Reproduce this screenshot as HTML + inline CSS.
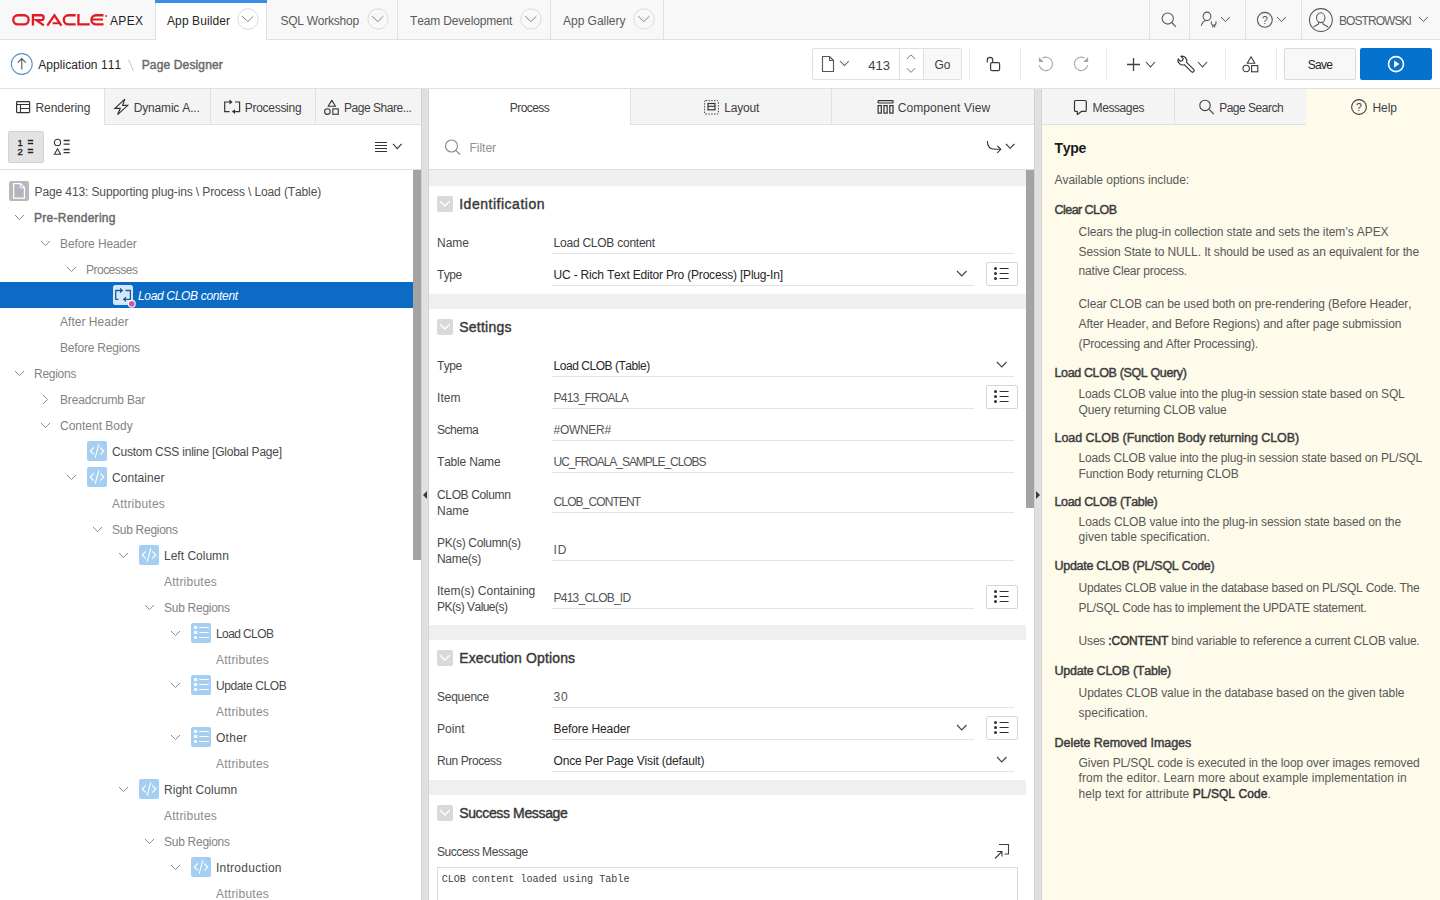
<!DOCTYPE html><html><head><meta charset="utf-8"><title>Page Designer</title><style>
html,body{margin:0;padding:0;width:1440px;height:900px;overflow:hidden;background:#fff;font-family:"Liberation Sans",sans-serif;}
.t{position:absolute;white-space:nowrap;font-kerning:none;}
.r{position:absolute;box-sizing:border-box;}
.s{position:absolute;overflow:visible;}
</style></head><body>
<div class="r" style="left:0px;top:0px;width:1440px;height:39px;background:#f8f8f8;"></div>
<div class="r" style="left:0px;top:39px;width:1440px;height:1px;background:#e0e0e0;"></div>
<svg class="s" style="left:10px;top:12px;" width="100" height="16" viewBox="0 0 100 16"><g fill="none" stroke="#e11b22" stroke-width="2.3">
<rect x="3.25" y="3.25" width="15.4" height="9.2" rx="4.6"/>
<path d="M22.95 13.6 V3.25 H31.2 A2.45 2.45 0 0 1 31.2 8.15 H26.3 L33.9 13.4"/>
<path d="M37.3 13.7 L44.4 3.3 L51.4 13.7"/>
<path d="M65.7 3.25 H58.4 A4.6 4.6 0 0 0 58.4 12.45 H65.7"/>
<path d="M68.45 2.1 V12.45 H79.7"/>
<path d="M93.5 3.25 H86.0 A4.6 4.6 0 0 0 86.0 12.45 H93.5"/>
</g><g stroke="#e11b22" stroke-width="2"><path d="M42.6 11.3 H49.3 M81.5 7.6 H93"/></g><circle cx="96.2" cy="4" r="0.9" fill="#e11b22"/></svg>
<div class="t" style="left:110.0px;top:14px;font-size:12px;line-height:14px;color:#222;font-weight:400;font-style:normal;font-family:'Liberation Sans', sans-serif;letter-spacing:0.328px;">APEX</div>
<div class="r" style="left:155px;top:0px;width:112px;height:40px;background:#fff;border-left:1px solid #e0e0e0;border-right:1px solid #e0e0e0;"></div>
<div class="r" style="left:155px;top:0px;width:112px;height:3px;background:#3a8ee6;"></div>
<div class="r" style="left:397px;top:0px;width:1px;height:39px;background:#e0e0e0;"></div>
<div class="r" style="left:550px;top:0px;width:1px;height:39px;background:#e0e0e0;"></div>
<div class="r" style="left:663px;top:0px;width:1px;height:39px;background:#e0e0e0;"></div>
<div class="t" style="left:167.0px;top:14px;font-size:12px;line-height:14px;color:#262626;font-weight:400;font-style:normal;font-family:'Liberation Sans', sans-serif;letter-spacing:0.106px;">App Builder</div>
<svg class="s" style="left:237px;top:8px;" width="22" height="22" viewBox="0 0 22 22"><circle cx="11" cy="11" r="10.2" fill="none" stroke="#dcdcdc" stroke-width="1"/><path d="M5.2 8.2 L10.8 13.6 L16.4 8.2" fill="none" stroke="#858585" stroke-width="1"/></svg>
<div class="t" style="left:280.4px;top:14px;font-size:12px;line-height:14px;color:#5a5a5a;font-weight:400;font-style:normal;font-family:'Liberation Sans', sans-serif;letter-spacing:-0.242px;">SQL Workshop</div>
<svg class="s" style="left:367px;top:8px;" width="22" height="22" viewBox="0 0 22 22"><circle cx="11" cy="11" r="10.2" fill="none" stroke="#dcdcdc" stroke-width="1"/><path d="M5.2 8.2 L10.8 13.6 L16.4 8.2" fill="none" stroke="#858585" stroke-width="1"/></svg>
<div class="t" style="left:410.0px;top:14px;font-size:12px;line-height:14px;color:#5a5a5a;font-weight:400;font-style:normal;font-family:'Liberation Sans', sans-serif;letter-spacing:-0.154px;">Team Development</div>
<svg class="s" style="left:520px;top:8px;" width="22" height="22" viewBox="0 0 22 22"><circle cx="11" cy="11" r="10.2" fill="none" stroke="#dcdcdc" stroke-width="1"/><path d="M5.2 8.2 L10.8 13.6 L16.4 8.2" fill="none" stroke="#858585" stroke-width="1"/></svg>
<div class="t" style="left:563.0px;top:14px;font-size:12px;line-height:14px;color:#5a5a5a;font-weight:400;font-style:normal;font-family:'Liberation Sans', sans-serif;letter-spacing:-0.02px;">App Gallery</div>
<svg class="s" style="left:633px;top:8px;" width="22" height="22" viewBox="0 0 22 22"><circle cx="11" cy="11" r="10.2" fill="none" stroke="#dcdcdc" stroke-width="1"/><path d="M5.2 8.2 L10.8 13.6 L16.4 8.2" fill="none" stroke="#858585" stroke-width="1"/></svg>
<div class="r" style="left:1149px;top:0px;width:1px;height:39px;background:#e0e0e0;"></div>
<div class="r" style="left:1189px;top:0px;width:1px;height:39px;background:#e0e0e0;"></div>
<div class="r" style="left:1245px;top:0px;width:1px;height:39px;background:#e0e0e0;"></div>
<div class="r" style="left:1301px;top:0px;width:1px;height:39px;background:#e0e0e0;"></div>
<svg class="s" style="left:1159px;top:11px;" width="20" height="20" viewBox="0 0 20 20"><circle cx="8.75" cy="7.5" r="5.6" fill="none" stroke="#555" stroke-width="1.05"/><path d="M12.7 11.5 L17 15.8" stroke="#555" stroke-width="1.1"/></svg>
<svg class="s" style="left:1198px;top:10px;" width="22" height="22" viewBox="0 0 22 22"><ellipse cx="9" cy="6.3" rx="3.9" ry="4.2" fill="none" stroke="#555" stroke-width="1.05"/><path d="M8.3 10.6 C6 11 4 12.5 3.3 15.9" fill="none" stroke="#555" stroke-width="1.05"/><path d="M13.3 11.2 V13 A2.35 2.35 0 0 0 18 13 V11.2 M14.8 15.2 V17.6 M16.5 15.2 V17.6" fill="none" stroke="#555" stroke-width="1.05"/></svg>
<svg class="s" style="left:1219.8px;top:16.2px;" width="10.8" height="6.6" viewBox="0 0 10.8 6.6"><path d="M1 1 L5.4 5.6 L9.8 1" fill="none" stroke="#555" stroke-width="1.0"/></svg>
<svg class="s" style="left:1255px;top:10px;" width="20" height="20" viewBox="0 0 20 20"><circle cx="9.85" cy="9.8" r="7.45" fill="none" stroke="#555" stroke-width="1.05"/><text x="9.85" y="13.8" font-size="10.5" text-anchor="middle" fill="#555" font-family="Liberation Sans">?</text></svg>
<svg class="s" style="left:1275.8px;top:16.2px;" width="10.8" height="6.6" viewBox="0 0 10.8 6.6"><path d="M1 1 L5.4 5.6 L9.8 1" fill="none" stroke="#555" stroke-width="1.0"/></svg>
<svg class="s" style="left:1307px;top:7px;" width="28" height="28" viewBox="0 0 28 28"><circle cx="13.9" cy="13" r="11.4" fill="none" stroke="#555" stroke-width="1.05"/><ellipse cx="13.75" cy="10.7" rx="4.2" ry="4.9" fill="none" stroke="#555" stroke-width="1.05"/><path d="M11.6 15.3 V17 L6.5 20 M15.9 15.3 V17 L21.2 20" fill="none" stroke="#555" stroke-width="1.05"/></svg>
<div class="t" style="left:1339.0px;top:14px;font-size:12px;line-height:14px;color:#5e5e5e;font-weight:400;font-style:normal;font-family:'Liberation Sans', sans-serif;letter-spacing:-0.938px;">BOSTROWSKI</div>
<svg class="s" style="left:1418.3px;top:16.2px;" width="10.8" height="6.6" viewBox="0 0 10.8 6.6"><path d="M1 1 L5.4 5.6 L9.8 1" fill="none" stroke="#555" stroke-width="1.0"/></svg>
<div class="r" style="left:0px;top:40px;width:1440px;height:48px;background:#fff;"></div>
<div class="r" style="left:0px;top:88px;width:1440px;height:1px;background:#e0e0e0;"></div>
<svg class="s" style="left:10px;top:52px;" width="24" height="24" viewBox="0 0 24 24"><circle cx="11.8" cy="12" r="10.4" fill="none" stroke="#6093c3" stroke-width="1.1"/><path d="M11.8 17.5 V6.8 M7.8 10.6 L11.8 6.6 L15.8 10.6" fill="none" stroke="#555" stroke-width="1.1"/></svg>
<div class="t" style="left:38.3px;top:58px;font-size:12px;line-height:14px;color:#262626;font-weight:400;font-style:normal;font-family:'Liberation Sans', sans-serif;letter-spacing:0.053px;">Application 111</div>
<svg class="s" style="left:126px;top:58px;" width="10" height="14" viewBox="0 0 10 14"><path d="M2.5 1.5 L7.5 13" stroke="#c8c8c8" stroke-width="1"/></svg>
<div class="t" style="left:141.7px;top:58px;font-size:12px;line-height:14px;color:#6b6b6b;font-weight:400;font-style:normal;font-family:'Liberation Sans', sans-serif;letter-spacing:0.143px;-webkit-text-stroke:0.45px #6b6b6b;">Page Designer</div>
<div class="r" style="left:812px;top:48px;width:150px;height:32px;background:#fff;border:1px solid #e0e0e0;border-radius:2px;"></div>
<div class="r" style="left:923px;top:49px;width:38px;height:30px;background:#f8f8f8;"></div>
<div class="r" style="left:899px;top:49px;width:1px;height:30px;background:#e0e0e0;"></div>
<div class="r" style="left:923px;top:49px;width:1px;height:30px;background:#e0e0e0;"></div>
<svg class="s" style="left:820px;top:55px;" width="16" height="18" viewBox="0 0 16 18"><path d="M2.5 1.5 H9.5 L13.5 5.5 V16.5 H2.5 Z M9.5 1.5 V5.5 H13.5" fill="none" stroke="#555" stroke-width="1.1" stroke-linejoin="round"/></svg>
<svg class="s" style="left:838.5px;top:60.3px;" width="10.8" height="6.5" viewBox="0 0 10.8 6.5"><path d="M1 1 L5.4 5.5 L9.8 1" fill="none" stroke="#555" stroke-width="1.05"/></svg>
<div class="t" style="left:868.3px;top:58px;font-size:13px;line-height:16px;color:#404040;font-weight:400;font-style:normal;font-family:'Liberation Sans', sans-serif;">413</div>
<svg class="s" style="left:904px;top:53px;" width="14" height="24" viewBox="0 0 14 24"><path d="M2.8 6 L7 1.8 L11.2 6 M2.8 15.2 L7 19.4 L11.2 15.2" fill="none" stroke="#777" stroke-width="1"/></svg>
<div class="t" style="left:642.5px;width:600px;text-align:center;top:58px;font-size:12px;line-height:14px;color:#404040;font-weight:400;">Go</div>
<div class="r" style="left:969px;top:48px;width:1px;height:32px;background:#ececec;"></div>
<div class="r" style="left:1020px;top:48px;width:1px;height:32px;background:#ececec;"></div>
<div class="r" style="left:1106px;top:48px;width:1px;height:32px;background:#ececec;"></div>
<div class="r" style="left:1225px;top:48px;width:1px;height:32px;background:#ececec;"></div>
<div class="r" style="left:1276px;top:48px;width:1px;height:32px;background:#ececec;"></div>
<svg class="s" style="left:984px;top:54px;" width="20" height="20" viewBox="0 0 20 20"><rect x="6.6" y="8.6" width="9" height="8" rx="1.3" fill="none" stroke="#3a3a3a" stroke-width="1.2"/><path d="M3.3 8.6 V6 A2.7 2.7 0 0 1 8.7 6 V8.6" fill="none" stroke="#3a3a3a" stroke-width="1.2"/></svg>
<svg class="s" style="left:1037px;top:55px;" width="20" height="18" viewBox="0 0 20 18"><path d="M5.45 3.1 A6.7 6.7 0 1 1 2.2 10" fill="none" stroke="#aaa" stroke-width="1.15"/><path d="M1.9 2 V7 H6.9 Z" fill="#a5a5a5"/></svg>
<svg class="s" style="left:1071px;top:55px;" width="20" height="18" viewBox="0 0 20 18"><path d="M13.45 3.1 A6.7 6.7 0 1 0 16.7 10" fill="none" stroke="#aaa" stroke-width="1.15"/><path d="M17.1 2 V7 H12.1 Z" fill="#a5a5a5"/></svg>
<svg class="s" style="left:1126px;top:57px;" width="16" height="16" viewBox="0 0 16 16"><path d="M7.5 1 V14 M1 7.5 H14" stroke="#404040" stroke-width="1.3"/></svg>
<svg class="s" style="left:1145px;top:61px;" width="11" height="7" viewBox="0 0 11 7"><path d="M1 1 L5.5 6 L10 1" fill="none" stroke="#404040" stroke-width="1.1"/></svg>
<svg class="s" style="left:1177px;top:55px;" width="20" height="20" viewBox="0 0 20 20"><path d="M9.6 7.4 A4.8 4.8 0 0 0 4 1.3 L6.3 3.7 L5.4 5.6 L3.3 6.2 L1.1 3.9 A4.8 4.8 0 0 0 7.3 9.7 L14.3 16.7 A1.65 1.65 0 0 0 16.7 14.3 Z" fill="none" stroke="#333" stroke-width="1.15" stroke-linejoin="round"/></svg>
<svg class="s" style="left:1197px;top:61px;" width="11" height="7" viewBox="0 0 11 7"><path d="M1 1 L5.5 6 L10 1" fill="none" stroke="#404040" stroke-width="1.1"/></svg>
<svg class="s" style="left:1241px;top:54px;" width="20" height="20" viewBox="0 0 20 20"><path d="M10.05 2.8 L13.9 9.3 H6.2 Z" fill="none" stroke="#3a3a3a" stroke-width="1.1" stroke-linejoin="round"/><circle cx="5.15" cy="14.5" r="3.2" fill="none" stroke="#3a3a3a" stroke-width="1.1"/><rect x="10.6" y="11.6" width="6.2" height="6.2" fill="none" stroke="#3a3a3a" stroke-width="1.1"/></svg>
<div class="r" style="left:1284px;top:48px;width:72px;height:32px;background:#f8f8f8;border:1px solid #d8d8d8;border-radius:2px;"></div>
<div class="t" style="left:1020.0px;width:600px;text-align:center;top:58px;font-size:12px;line-height:14px;color:#262626;font-weight:400;letter-spacing:-0.751px;">Save</div>
<div class="r" style="left:1360px;top:48px;width:72px;height:32px;background:#0572ce;border-radius:2px;"></div>
<svg class="s" style="left:1386px;top:55px;" width="20" height="20" viewBox="0 0 20 20"><circle cx="10" cy="9.1" r="7.5" fill="none" stroke="#fff" stroke-width="1.6"/><path d="M8.1 5.4 L13.4 9.1 L8.1 12.8 Z" fill="#fff"/></svg>
<div class="r" style="left:0px;top:89px;width:421px;height:36px;background:#f4f4f4;"></div>
<div class="r" style="left:0px;top:124px;width:421px;height:1px;background:#e0e0e0;"></div>
<div class="r" style="left:0px;top:89px;width:104px;height:36px;background:#fff;"></div>
<div class="r" style="left:104px;top:89px;width:1px;height:35px;background:#e0e0e0;"></div>
<div class="r" style="left:210px;top:89px;width:1px;height:35px;background:#e0e0e0;"></div>
<div class="r" style="left:315px;top:89px;width:1px;height:35px;background:#e0e0e0;"></div>
<svg class="s" style="left:14px;top:98px;" width="18" height="18" viewBox="0 0 18 18"><rect x="2.6" y="3.6" width="13" height="11" rx="0.8" fill="none" stroke="#333" stroke-width="1.2"/><path d="M2.6 6.5 H15.6 M6.5 6.5 V14.6 M6.5 10.5 H15.6" fill="none" stroke="#333" stroke-width="1.1"/></svg>
<div class="t" style="left:35.5px;top:101px;font-size:12px;line-height:14px;color:#404040;font-weight:400;font-style:normal;font-family:'Liberation Sans', sans-serif;letter-spacing:-0.071px;">Rendering</div>
<svg class="s" style="left:113px;top:97px;" width="18" height="20" viewBox="0 0 18 20"><path d="M11.8 2.1 L1.9 11.3 H7.3 L4.6 17.6 L14.7 8.4 H9.6 Z" fill="none" stroke="#333" stroke-width="1.15" stroke-linejoin="miter"/></svg>
<div class="t" style="left:133.8px;top:101px;font-size:12px;line-height:14px;color:#404040;font-weight:400;font-style:normal;font-family:'Liberation Sans', sans-serif;letter-spacing:-0.183px;">Dynamic A...</div>
<svg class="s" style="left:222px;top:97px;" width="20" height="20" viewBox="0 0 20 20"><path d="M8 5 H2.7 V14.6 H7.5 M13 5 H17.6 V14.6 H12" fill="none" stroke="#333" stroke-width="1.2"/><path d="M7.5 2.6 L10.6 5 L7.5 7.4 Z M13 12.2 L9.9 14.6 L13 17 Z" fill="#333"/></svg>
<div class="t" style="left:244.7px;top:101px;font-size:12px;line-height:14px;color:#404040;font-weight:400;font-style:normal;font-family:'Liberation Sans', sans-serif;letter-spacing:-0.273px;">Processing</div>
<svg class="s" style="left:322px;top:97px;" width="20" height="20" viewBox="0 0 20 20"><path d="M9.8 3.4 L13.5 9.2 H6.1 Z" fill="none" stroke="#333" stroke-width="1.1" stroke-linejoin="round"/><circle cx="5.4" cy="14.6" r="2.8" fill="none" stroke="#333" stroke-width="1.1"/><rect x="10.85" y="11.85" width="5.4" height="5.4" fill="none" stroke="#333" stroke-width="1.1"/></svg>
<div class="t" style="left:344.0px;top:101px;font-size:12px;line-height:14px;color:#404040;font-weight:400;font-style:normal;font-family:'Liberation Sans', sans-serif;letter-spacing:-0.457px;">Page Share...</div>
<div class="r" style="left:0px;top:169px;width:421px;height:1px;background:#e0e0e0;"></div>
<div class="r" style="left:8px;top:131px;width:36px;height:32px;background:#e3e3e3;border:1px solid #d2d2d2;border-radius:2px;"></div>
<svg class="s" style="left:16px;top:138px;" width="20" height="18" viewBox="0 0 20 18"><text x="1.6" y="7.9" font-size="9.6" font-family="Liberation Sans" fill="#222" stroke="#222" stroke-width="0.35">1</text><text x="1.6" y="16.9" font-size="9.6" font-family="Liberation Sans" fill="#222" stroke="#222" stroke-width="0.35">2</text><path d="M11.8 2.5 H17.2 M11.8 5.6 H17.2 M11.8 11.4 H17.2 M11.8 14.5 H17.2" stroke="#222" stroke-width="1.5"/></svg>
<svg class="s" style="left:52px;top:138px;" width="20" height="18" viewBox="0 0 20 18"><circle cx="5.5" cy="4.4" r="3.1" fill="none" stroke="#333" stroke-width="1.1"/><path d="M5.5 10.8 L8.6 16.2 H2.4 Z" fill="none" stroke="#333" stroke-width="1.1"/><path d="M11.6 2.5 H17.7 M11.6 6.2 H17.7 M11.6 11.5 H17.7 M11.6 14.6 H17.7" stroke="#333" stroke-width="1.3"/></svg>
<svg class="s" style="left:374px;top:140px;" width="14" height="14" viewBox="0 0 14 14"><path d="M1 2.5 H13 M1 5.5 H13 M1 8.5 H13 M1 11.5 H13" stroke="#333" stroke-width="1.1"/></svg>
<svg class="s" style="left:392px;top:143px;" width="10.6" height="6.6" viewBox="0 0 10.6 6.6"><path d="M1 1 L5.3 5.6 L9.6 1" fill="none" stroke="#333" stroke-width="1.1"/></svg>
<div class="r" style="left:413px;top:170px;width:8px;height:390px;background:#a3a3a3;"></div>
<div class="r" style="left:0px;top:282px;width:413px;height:26px;background:#0b6bc5;"></div>
<svg class="s" style="left:9px;top:181px;" width="20" height="20" viewBox="0 0 20 20"><rect x="0" y="0" width="20" height="20" rx="2" fill="#b9b9b9"/><path d="M4.7 2.6 H11.6 L15.4 6.4 V17.2 H4.7 Z" fill="#b5b3bd" stroke="#fff" stroke-width="1.2" stroke-linejoin="miter"/><path d="M11.3 2.6 V6.7 H15.4" fill="none" stroke="#fff" stroke-width="1"/></svg>
<div class="t" style="left:34.6px;top:185px;font-size:12px;line-height:14px;color:#505050;font-weight:400;font-style:normal;font-family:'Liberation Sans', sans-serif;letter-spacing:-0.118px;">Page 413: Supporting plug-ins \ Process \ Load (Table)</div>
<svg class="s" style="left:13.8px;top:214px;" width="11" height="6.6" viewBox="0 0 11 6.6"><path d="M1 1 L5.5 5.6 L10 1" fill="none" stroke="#8a8a8a" stroke-width="1.0"/></svg>
<div class="t" style="left:34.0px;top:211px;font-size:12px;line-height:14px;color:#6a6a6a;font-weight:400;font-style:normal;font-family:'Liberation Sans', sans-serif;letter-spacing:0.288px;-webkit-text-stroke:0.45px #6a6a6a;">Pre-Rendering</div>
<svg class="s" style="left:39.8px;top:240px;" width="11" height="6.6" viewBox="0 0 11 6.6"><path d="M1 1 L5.5 5.6 L10 1" fill="none" stroke="#8a8a8a" stroke-width="1.0"/></svg>
<div class="t" style="left:60.0px;top:237px;font-size:12px;line-height:14px;color:#838383;font-weight:400;font-style:normal;font-family:'Liberation Sans', sans-serif;letter-spacing:-0.112px;">Before Header</div>
<svg class="s" style="left:65.8px;top:266px;" width="11" height="6.6" viewBox="0 0 11 6.6"><path d="M1 1 L5.5 5.6 L10 1" fill="none" stroke="#8a8a8a" stroke-width="1.0"/></svg>
<div class="t" style="left:86.0px;top:263px;font-size:12px;line-height:14px;color:#838383;font-weight:400;font-style:normal;font-family:'Liberation Sans', sans-serif;letter-spacing:-0.515px;">Processes</div>
<svg class="s" style="left:113px;top:285px;" width="24" height="24" viewBox="0 0 24 24"><rect x="0" y="0" width="20" height="20" rx="2.5" fill="#d3e9fb"/><path d="M7.5 5.5 H2.7 V14.3 H5.5 M12.5 5.5 H17.4 V14.3 H12" fill="none" stroke="#1f5a9c" stroke-width="1.3"/><path d="M7 2.8 L10.3 5.5 L7 8.2 Z M13 11.6 L9.7 14.3 L13 17 Z" fill="#1f5a9c"/><circle cx="18.8" cy="18.8" r="3.4" fill="#c85a9e" stroke="#fff" stroke-width="1.1"/></svg>
<div class="t" style="left:138.0px;top:289px;font-size:12px;line-height:14px;color:#ffffff;font-weight:400;font-style:italic;font-family:'Liberation Sans', sans-serif;letter-spacing:-0.332px;">Load CLOB content</div>
<div class="t" style="left:60.0px;top:315px;font-size:12px;line-height:14px;color:#838383;font-weight:400;font-style:normal;font-family:'Liberation Sans', sans-serif;letter-spacing:0.033px;">After Header</div>
<div class="t" style="left:60.0px;top:341px;font-size:12px;line-height:14px;color:#838383;font-weight:400;font-style:normal;font-family:'Liberation Sans', sans-serif;letter-spacing:-0.201px;">Before Regions</div>
<svg class="s" style="left:13.8px;top:370px;" width="11" height="6.6" viewBox="0 0 11 6.6"><path d="M1 1 L5.5 5.6 L10 1" fill="none" stroke="#8a8a8a" stroke-width="1.0"/></svg>
<div class="t" style="left:34.0px;top:367px;font-size:12px;line-height:14px;color:#838383;font-weight:400;font-style:normal;font-family:'Liberation Sans', sans-serif;letter-spacing:-0.271px;">Regions</div>
<svg class="s" style="left:42.3px;top:393.5px;" width="6.6" height="11" viewBox="0 0 6.6 11"><path d="M1 1 L5.6 5.5 L1 10" fill="none" stroke="#8a8a8a" stroke-width="1.0"/></svg>
<div class="t" style="left:60.0px;top:393px;font-size:12px;line-height:14px;color:#838383;font-weight:400;font-style:normal;font-family:'Liberation Sans', sans-serif;letter-spacing:-0.159px;">Breadcrumb Bar</div>
<svg class="s" style="left:39.8px;top:422px;" width="11" height="6.6" viewBox="0 0 11 6.6"><path d="M1 1 L5.5 5.6 L10 1" fill="none" stroke="#8a8a8a" stroke-width="1.0"/></svg>
<div class="t" style="left:60.0px;top:419px;font-size:12px;line-height:14px;color:#838383;font-weight:400;font-style:normal;font-family:'Liberation Sans', sans-serif;letter-spacing:-0.001px;">Content Body</div>
<svg class="s" style="left:87px;top:441px;" width="20" height="20" viewBox="0 0 20 20"><rect x="0" y="0" width="20" height="20" rx="2" fill="#a5cef3"/><path d="M6.8 6.3 L3.2 10 L6.8 13.7 M13.2 6.3 L16.8 10 L13.2 13.7 M11.8 3.3 L8.2 16.7" fill="none" stroke="#fff" stroke-width="1.15"/></svg>
<div class="t" style="left:112.0px;top:445px;font-size:12px;line-height:14px;color:#4a4a4a;font-weight:400;font-style:normal;font-family:'Liberation Sans', sans-serif;letter-spacing:-0.222px;">Custom CSS inline [Global Page]</div>
<svg class="s" style="left:65.8px;top:474px;" width="11" height="6.6" viewBox="0 0 11 6.6"><path d="M1 1 L5.5 5.6 L10 1" fill="none" stroke="#8a8a8a" stroke-width="1.0"/></svg>
<svg class="s" style="left:87px;top:467px;" width="20" height="20" viewBox="0 0 20 20"><rect x="0" y="0" width="20" height="20" rx="2" fill="#a5cef3"/><path d="M6.8 6.3 L3.2 10 L6.8 13.7 M13.2 6.3 L16.8 10 L13.2 13.7 M11.8 3.3 L8.2 16.7" fill="none" stroke="#fff" stroke-width="1.15"/></svg>
<div class="t" style="left:112.0px;top:471px;font-size:12px;line-height:14px;color:#4a4a4a;font-weight:400;font-style:normal;font-family:'Liberation Sans', sans-serif;letter-spacing:0.046px;">Container</div>
<div class="t" style="left:112.0px;top:497px;font-size:12px;line-height:14px;color:#8c8c8c;font-weight:400;font-style:normal;font-family:'Liberation Sans', sans-serif;letter-spacing:0.235px;">Attributes</div>
<svg class="s" style="left:91.8px;top:526px;" width="11" height="6.6" viewBox="0 0 11 6.6"><path d="M1 1 L5.5 5.6 L10 1" fill="none" stroke="#8a8a8a" stroke-width="1.0"/></svg>
<div class="t" style="left:112.0px;top:523px;font-size:12px;line-height:14px;color:#838383;font-weight:400;font-style:normal;font-family:'Liberation Sans', sans-serif;letter-spacing:-0.271px;">Sub Regions</div>
<svg class="s" style="left:117.8px;top:552px;" width="11" height="6.6" viewBox="0 0 11 6.6"><path d="M1 1 L5.5 5.6 L10 1" fill="none" stroke="#8a8a8a" stroke-width="1.0"/></svg>
<svg class="s" style="left:139px;top:545px;" width="20" height="20" viewBox="0 0 20 20"><rect x="0" y="0" width="20" height="20" rx="2" fill="#a5cef3"/><path d="M6.8 6.3 L3.2 10 L6.8 13.7 M13.2 6.3 L16.8 10 L13.2 13.7 M11.8 3.3 L8.2 16.7" fill="none" stroke="#fff" stroke-width="1.15"/></svg>
<div class="t" style="left:164.0px;top:549px;font-size:12px;line-height:14px;color:#4a4a4a;font-weight:400;font-style:normal;font-family:'Liberation Sans', sans-serif;letter-spacing:0.01px;">Left Column</div>
<div class="t" style="left:164.0px;top:575px;font-size:12px;line-height:14px;color:#8c8c8c;font-weight:400;font-style:normal;font-family:'Liberation Sans', sans-serif;letter-spacing:0.235px;">Attributes</div>
<svg class="s" style="left:143.8px;top:604px;" width="11" height="6.6" viewBox="0 0 11 6.6"><path d="M1 1 L5.5 5.6 L10 1" fill="none" stroke="#8a8a8a" stroke-width="1.0"/></svg>
<div class="t" style="left:164.0px;top:601px;font-size:12px;line-height:14px;color:#838383;font-weight:400;font-style:normal;font-family:'Liberation Sans', sans-serif;letter-spacing:-0.271px;">Sub Regions</div>
<svg class="s" style="left:169.8px;top:630px;" width="11" height="6.6" viewBox="0 0 11 6.6"><path d="M1 1 L5.5 5.6 L10 1" fill="none" stroke="#8a8a8a" stroke-width="1.0"/></svg>
<svg class="s" style="left:191px;top:623px;" width="20" height="20" viewBox="0 0 20 20"><rect x="0" y="0" width="20" height="20" rx="2" fill="#a5cef3"/><path d="M8.2 4.5 H17.8 M8.2 9.5 H17.8 M8.2 14.5 H17.8" stroke="#fff" stroke-width="1.1"/><rect x="3" y="3" width="3.2" height="3" fill="#fff"/><rect x="3" y="8" width="3.2" height="3" fill="#fff"/><rect x="3" y="13" width="3.2" height="3" rx="1.2" fill="#fff"/></svg>
<div class="t" style="left:216.0px;top:627px;font-size:12px;line-height:14px;color:#4a4a4a;font-weight:400;font-style:normal;font-family:'Liberation Sans', sans-serif;letter-spacing:-0.601px;">Load CLOB</div>
<div class="t" style="left:216.0px;top:653px;font-size:12px;line-height:14px;color:#8c8c8c;font-weight:400;font-style:normal;font-family:'Liberation Sans', sans-serif;letter-spacing:0.235px;">Attributes</div>
<svg class="s" style="left:169.8px;top:682px;" width="11" height="6.6" viewBox="0 0 11 6.6"><path d="M1 1 L5.5 5.6 L10 1" fill="none" stroke="#8a8a8a" stroke-width="1.0"/></svg>
<svg class="s" style="left:191px;top:675px;" width="20" height="20" viewBox="0 0 20 20"><rect x="0" y="0" width="20" height="20" rx="2" fill="#a5cef3"/><path d="M8.2 4.5 H17.8 M8.2 9.5 H17.8 M8.2 14.5 H17.8" stroke="#fff" stroke-width="1.1"/><rect x="3" y="3" width="3.2" height="3" fill="#fff"/><rect x="3" y="8" width="3.2" height="3" fill="#fff"/><rect x="3" y="13" width="3.2" height="3" rx="1.2" fill="#fff"/></svg>
<div class="t" style="left:216.0px;top:679px;font-size:12px;line-height:14px;color:#4a4a4a;font-weight:400;font-style:normal;font-family:'Liberation Sans', sans-serif;letter-spacing:-0.401px;">Update CLOB</div>
<div class="t" style="left:216.0px;top:705px;font-size:12px;line-height:14px;color:#8c8c8c;font-weight:400;font-style:normal;font-family:'Liberation Sans', sans-serif;letter-spacing:0.235px;">Attributes</div>
<svg class="s" style="left:169.8px;top:734px;" width="11" height="6.6" viewBox="0 0 11 6.6"><path d="M1 1 L5.5 5.6 L10 1" fill="none" stroke="#8a8a8a" stroke-width="1.0"/></svg>
<svg class="s" style="left:191px;top:727px;" width="20" height="20" viewBox="0 0 20 20"><rect x="0" y="0" width="20" height="20" rx="2" fill="#a5cef3"/><path d="M8.2 4.5 H17.8 M8.2 9.5 H17.8 M8.2 14.5 H17.8" stroke="#fff" stroke-width="1.1"/><rect x="3" y="3" width="3.2" height="3" fill="#fff"/><rect x="3" y="8" width="3.2" height="3" fill="#fff"/><rect x="3" y="13" width="3.2" height="3" rx="1.2" fill="#fff"/></svg>
<div class="t" style="left:216.0px;top:731px;font-size:12px;line-height:14px;color:#4a4a4a;font-weight:400;font-style:normal;font-family:'Liberation Sans', sans-serif;letter-spacing:0.272px;">Other</div>
<div class="t" style="left:216.0px;top:757px;font-size:12px;line-height:14px;color:#8c8c8c;font-weight:400;font-style:normal;font-family:'Liberation Sans', sans-serif;letter-spacing:0.235px;">Attributes</div>
<svg class="s" style="left:117.8px;top:786px;" width="11" height="6.6" viewBox="0 0 11 6.6"><path d="M1 1 L5.5 5.6 L10 1" fill="none" stroke="#8a8a8a" stroke-width="1.0"/></svg>
<svg class="s" style="left:139px;top:779px;" width="20" height="20" viewBox="0 0 20 20"><rect x="0" y="0" width="20" height="20" rx="2" fill="#a5cef3"/><path d="M6.8 6.3 L3.2 10 L6.8 13.7 M13.2 6.3 L16.8 10 L13.2 13.7 M11.8 3.3 L8.2 16.7" fill="none" stroke="#fff" stroke-width="1.15"/></svg>
<div class="t" style="left:164.0px;top:783px;font-size:12px;line-height:14px;color:#4a4a4a;font-weight:400;font-style:normal;font-family:'Liberation Sans', sans-serif;letter-spacing:0.037px;">Right Column</div>
<div class="t" style="left:164.0px;top:809px;font-size:12px;line-height:14px;color:#8c8c8c;font-weight:400;font-style:normal;font-family:'Liberation Sans', sans-serif;letter-spacing:0.235px;">Attributes</div>
<svg class="s" style="left:143.8px;top:838px;" width="11" height="6.6" viewBox="0 0 11 6.6"><path d="M1 1 L5.5 5.6 L10 1" fill="none" stroke="#8a8a8a" stroke-width="1.0"/></svg>
<div class="t" style="left:164.0px;top:835px;font-size:12px;line-height:14px;color:#838383;font-weight:400;font-style:normal;font-family:'Liberation Sans', sans-serif;letter-spacing:-0.271px;">Sub Regions</div>
<svg class="s" style="left:169.8px;top:864px;" width="11" height="6.6" viewBox="0 0 11 6.6"><path d="M1 1 L5.5 5.6 L10 1" fill="none" stroke="#8a8a8a" stroke-width="1.0"/></svg>
<svg class="s" style="left:191px;top:857px;" width="20" height="20" viewBox="0 0 20 20"><rect x="0" y="0" width="20" height="20" rx="2" fill="#a5cef3"/><path d="M6.8 6.3 L3.2 10 L6.8 13.7 M13.2 6.3 L16.8 10 L13.2 13.7 M11.8 3.3 L8.2 16.7" fill="none" stroke="#fff" stroke-width="1.15"/></svg>
<div class="t" style="left:216.0px;top:861px;font-size:12px;line-height:14px;color:#4a4a4a;font-weight:400;font-style:normal;font-family:'Liberation Sans', sans-serif;letter-spacing:0.254px;">Introduction</div>
<div class="t" style="left:216.0px;top:887px;font-size:12px;line-height:14px;color:#8c8c8c;font-weight:400;font-style:normal;font-family:'Liberation Sans', sans-serif;letter-spacing:0.235px;">Attributes</div>
<div class="r" style="left:421px;top:89px;width:8px;height:811px;background:#e0e0e0;border-left:1px solid #d2d2d2;border-right:1px solid #d4d4d4;"></div>
<svg class="s" style="left:422px;top:490px;" width="6" height="10" viewBox="0 0 6 10"><path d="M5 1 L1 5 L5 9 Z" fill="#3a3a3a"/></svg>
<div class="r" style="left:429px;top:89px;width:605px;height:36px;background:#f4f4f4;"></div>
<div class="r" style="left:429px;top:124px;width:605px;height:1px;background:#e0e0e0;"></div>
<div class="r" style="left:429px;top:89px;width:201px;height:36px;background:#fff;"></div>
<div class="r" style="left:630px;top:89px;width:1px;height:35px;background:#e0e0e0;"></div>
<div class="r" style="left:831px;top:89px;width:1px;height:35px;background:#e0e0e0;"></div>
<div class="t" style="left:229.5px;width:600px;text-align:center;top:101px;font-size:12px;line-height:14px;color:#404040;font-weight:400;letter-spacing:-0.575px;">Process</div>
<svg class="s" style="left:703px;top:99px;" width="18" height="18" viewBox="0 0 18 18"><rect x="1.6" y="1.6" width="13.8" height="13.4" rx="1" fill="none" stroke="#404040" stroke-width="1" stroke-dasharray="1.5 1.3"/><rect x="5" y="4.5" width="7" height="6.3" fill="none" stroke="#333" stroke-width="1.2"/><path d="M5 7.3 H12" stroke="#333" stroke-width="1.1"/></svg>
<div class="t" style="left:724.3px;top:101px;font-size:12px;line-height:14px;color:#404040;font-weight:400;font-style:normal;font-family:'Liberation Sans', sans-serif;letter-spacing:-0.186px;">Layout</div>
<svg class="s" style="left:876px;top:98px;" width="19" height="18" viewBox="0 0 19 18"><rect x="2.1" y="2.6" width="15" height="2.4" rx="0.8" fill="none" stroke="#333" stroke-width="1.2"/><rect x="2.1" y="7.6" width="3.2" height="7.5" fill="none" stroke="#333" stroke-width="1.2"/><rect x="7.95" y="7.6" width="3.2" height="7.5" fill="none" stroke="#333" stroke-width="1.2"/><rect x="13.8" y="7.6" width="3.2" height="7.5" fill="none" stroke="#333" stroke-width="1.2"/></svg>
<div class="t" style="left:897.8px;top:101px;font-size:12px;line-height:14px;color:#404040;font-weight:400;font-style:normal;font-family:'Liberation Sans', sans-serif;letter-spacing:0.071px;">Component View</div>
<div class="r" style="left:429px;top:169px;width:605px;height:1px;background:#e0e0e0;"></div>
<svg class="s" style="left:443px;top:138px;" width="20" height="20" viewBox="0 0 20 20"><circle cx="8.5" cy="8" r="6" fill="none" stroke="#8a8a8a" stroke-width="1.1"/><path d="M12.8 12.3 L17 16.5" stroke="#8a8a8a" stroke-width="1.2"/></svg>
<div class="t" style="left:469.4px;top:141px;font-size:12px;line-height:14px;color:#8f8f8f;font-weight:400;font-style:normal;font-family:'Liberation Sans', sans-serif;letter-spacing:0.007px;">Filter</div>
<svg class="s" style="left:985px;top:139px;" width="18" height="16" viewBox="0 0 18 16"><path d="M2.4 2 C2.4 7 5 10.3 10 10.3 H15.6" fill="none" stroke="#333" stroke-width="1.1"/><path d="M12.3 6.8 L15.8 10.3 L12.3 13.8" fill="none" stroke="#333" stroke-width="1.1"/></svg>
<svg class="s" style="left:1004.8px;top:143.4px;" width="10.4" height="6.3" viewBox="0 0 10.4 6.3"><path d="M1 1 L5.2 5.3 L9.4 1" fill="none" stroke="#333" stroke-width="1.1"/></svg>
<div class="r" style="left:429px;top:170px;width:597px;height:730px;background:#efefef;"></div>
<div class="r" style="left:1026px;top:170px;width:8px;height:730px;background:#fff;"></div>
<div class="r" style="left:1026px;top:170px;width:8px;height:338px;background:#a3a3a3;"></div>
<div class="r" style="left:429px;top:186px;width:597px;height:108px;background:#fff;"></div>
<svg class="s" style="left:437px;top:196px;" width="16" height="16" viewBox="0 0 16 16"><rect x="0" y="0" width="16" height="16" rx="2" fill="#d9d9d9"/><path d="M3.2 5.2 L7.9 9.9 L12.6 5.2" fill="none" stroke="#fff" stroke-width="1.4"/></svg>
<div class="t" style="left:459.2px;top:196px;font-size:14px;line-height:17px;color:#383838;font-weight:400;font-style:normal;font-family:'Liberation Sans', sans-serif;letter-spacing:0.521px;-webkit-text-stroke:0.4px #383838;">Identification</div>
<div class="t" style="left:437.0px;top:236px;font-size:12px;line-height:14px;color:#484848;font-weight:400;font-style:normal;font-family:'Liberation Sans', sans-serif;letter-spacing:-0.003px;">Name</div>
<div class="t" style="left:553.6px;top:236px;font-size:12px;line-height:14px;color:#404040;font-weight:400;font-style:normal;font-family:'Liberation Sans', sans-serif;letter-spacing:-0.244px;">Load CLOB content</div>
<div class="r" style="left:552px;top:253px;width:462px;height:1px;background:#e2e2e2;"></div>
<div class="t" style="left:437.0px;top:268px;font-size:12px;line-height:14px;color:#484848;font-weight:400;font-style:normal;font-family:'Liberation Sans', sans-serif;letter-spacing:-0.526px;">Type</div>
<div class="t" style="left:553.6px;top:268px;font-size:12px;line-height:14px;color:#262626;font-weight:400;font-style:normal;font-family:'Liberation Sans', sans-serif;letter-spacing:-0.195px;">UC - Rich Text Editor Pro (Process) [Plug-In]</div>
<div class="r" style="left:552px;top:285px;width:422px;height:1px;background:#e2e2e2;"></div>
<svg class="s" style="left:956.3px;top:270px;" width="11.5" height="7" viewBox="0 0 11.5 7"><path d="M1 1 L5.75 6 L10.5 1" fill="none" stroke="#404040" stroke-width="1.1"/></svg>
<div class="r" style="left:986px;top:262px;width:32px;height:24px;background:#fff;border:1px solid #d6d6d6;border-radius:2px;"></div>
<svg class="s" style="left:986px;top:262px;" width="32" height="24" viewBox="0 0 32 24"><circle cx="9.5" cy="6.5" r="1.5" fill="#303030"/><circle cx="9.5" cy="11.5" r="1.5" fill="#303030"/><circle cx="9.5" cy="16.5" r="1.5" fill="#303030"/><path d="M13.6 6.5 H22.6 M13.6 11.5 H22.6 M13.6 16.5 H22.6" stroke="#303030" stroke-width="1.2"/></svg>
<div class="r" style="left:429px;top:309px;width:597px;height:316px;background:#fff;"></div>
<svg class="s" style="left:437px;top:319px;" width="16" height="16" viewBox="0 0 16 16"><rect x="0" y="0" width="16" height="16" rx="2" fill="#d9d9d9"/><path d="M3.2 5.2 L7.9 9.9 L12.6 5.2" fill="none" stroke="#fff" stroke-width="1.4"/></svg>
<div class="t" style="left:459.2px;top:319px;font-size:14px;line-height:17px;color:#383838;font-weight:400;font-style:normal;font-family:'Liberation Sans', sans-serif;letter-spacing:0.257px;-webkit-text-stroke:0.4px #383838;">Settings</div>
<div class="t" style="left:437.0px;top:359px;font-size:12px;line-height:14px;color:#484848;font-weight:400;font-style:normal;font-family:'Liberation Sans', sans-serif;letter-spacing:-0.526px;">Type</div>
<div class="t" style="left:553.6px;top:359px;font-size:12px;line-height:14px;color:#262626;font-weight:400;font-style:normal;font-family:'Liberation Sans', sans-serif;letter-spacing:-0.466px;">Load CLOB (Table)</div>
<div class="r" style="left:552px;top:376px;width:462px;height:1px;background:#e2e2e2;"></div>
<svg class="s" style="left:996px;top:361px;" width="11.5" height="7" viewBox="0 0 11.5 7"><path d="M1 1 L5.75 6 L10.5 1" fill="none" stroke="#404040" stroke-width="1.1"/></svg>
<div class="t" style="left:437.0px;top:391px;font-size:12px;line-height:14px;color:#484848;font-weight:400;font-style:normal;font-family:'Liberation Sans', sans-serif;letter-spacing:0.054px;">Item</div>
<div class="t" style="left:553.6px;top:391px;font-size:12px;line-height:14px;color:#555555;font-weight:400;font-style:normal;font-family:'Liberation Sans', sans-serif;letter-spacing:-0.761px;">P413_FROALA</div>
<div class="r" style="left:552px;top:408px;width:422px;height:1px;background:#e2e2e2;"></div>
<div class="r" style="left:986px;top:385px;width:32px;height:24px;background:#fff;border:1px solid #d6d6d6;border-radius:2px;"></div>
<svg class="s" style="left:986px;top:385px;" width="32" height="24" viewBox="0 0 32 24"><circle cx="9.5" cy="6.5" r="1.5" fill="#303030"/><circle cx="9.5" cy="11.5" r="1.5" fill="#303030"/><circle cx="9.5" cy="16.5" r="1.5" fill="#303030"/><path d="M13.6 6.5 H22.6 M13.6 11.5 H22.6 M13.6 16.5 H22.6" stroke="#303030" stroke-width="1.2"/></svg>
<div class="t" style="left:437.0px;top:423px;font-size:12px;line-height:14px;color:#484848;font-weight:400;font-style:normal;font-family:'Liberation Sans', sans-serif;letter-spacing:-0.464px;">Schema</div>
<div class="t" style="left:553.6px;top:423px;font-size:12px;line-height:14px;color:#555555;font-weight:400;font-style:normal;font-family:'Liberation Sans', sans-serif;letter-spacing:-0.307px;">#OWNER#</div>
<div class="r" style="left:552px;top:440px;width:462px;height:1px;background:#e2e2e2;"></div>
<div class="t" style="left:437.0px;top:455px;font-size:12px;line-height:14px;color:#484848;font-weight:400;font-style:normal;font-family:'Liberation Sans', sans-serif;letter-spacing:-0.196px;">Table Name</div>
<div class="t" style="left:553.6px;top:455px;font-size:12px;line-height:14px;color:#555555;font-weight:400;font-style:normal;font-family:'Liberation Sans', sans-serif;letter-spacing:-1.035px;">UC_FROALA_SAMPLE_CLOBS</div>
<div class="r" style="left:552px;top:472px;width:462px;height:1px;background:#e2e2e2;"></div>
<div class="t" style="left:437.0px;top:488px;font-size:12px;line-height:14px;color:#484848;font-weight:400;font-style:normal;font-family:'Liberation Sans', sans-serif;letter-spacing:-0.356px;">CLOB Column</div>
<div class="t" style="left:437.0px;top:504px;font-size:12px;line-height:14px;color:#484848;font-weight:400;font-style:normal;font-family:'Liberation Sans', sans-serif;letter-spacing:-0.003px;">Name</div>
<div class="t" style="left:553.6px;top:495px;font-size:12px;line-height:14px;color:#555555;font-weight:400;font-style:normal;font-family:'Liberation Sans', sans-serif;letter-spacing:-0.895px;">CLOB_CONTENT</div>
<div class="r" style="left:552px;top:512px;width:462px;height:1px;background:#e2e2e2;"></div>
<div class="t" style="left:437.0px;top:536px;font-size:12px;line-height:14px;color:#484848;font-weight:400;font-style:normal;font-family:'Liberation Sans', sans-serif;letter-spacing:-0.334px;">PK(s) Column(s)</div>
<div class="t" style="left:437.0px;top:552px;font-size:12px;line-height:14px;color:#484848;font-weight:400;font-style:normal;font-family:'Liberation Sans', sans-serif;letter-spacing:-0.3px;">Name(s)</div>
<div class="t" style="left:553.6px;top:543px;font-size:12px;line-height:14px;color:#555555;font-weight:400;font-style:normal;font-family:'Liberation Sans', sans-serif;letter-spacing:0.7px;">ID</div>
<div class="r" style="left:552px;top:560px;width:462px;height:1px;background:#e2e2e2;"></div>
<div class="t" style="left:437.0px;top:584px;font-size:12px;line-height:14px;color:#484848;font-weight:400;font-style:normal;font-family:'Liberation Sans', sans-serif;letter-spacing:0.015px;">Item(s) Containing</div>
<div class="t" style="left:437.0px;top:600px;font-size:12px;line-height:14px;color:#484848;font-weight:400;font-style:normal;font-family:'Liberation Sans', sans-serif;letter-spacing:-0.548px;">PK(s) Value(s)</div>
<div class="t" style="left:553.6px;top:591px;font-size:12px;line-height:14px;color:#555555;font-weight:400;font-style:normal;font-family:'Liberation Sans', sans-serif;letter-spacing:-0.777px;">P413_CLOB_ID</div>
<div class="r" style="left:552px;top:608px;width:422px;height:1px;background:#e2e2e2;"></div>
<div class="r" style="left:986px;top:585px;width:32px;height:24px;background:#fff;border:1px solid #d6d6d6;border-radius:2px;"></div>
<svg class="s" style="left:986px;top:585px;" width="32" height="24" viewBox="0 0 32 24"><circle cx="9.5" cy="6.5" r="1.5" fill="#303030"/><circle cx="9.5" cy="11.5" r="1.5" fill="#303030"/><circle cx="9.5" cy="16.5" r="1.5" fill="#303030"/><path d="M13.6 6.5 H22.6 M13.6 11.5 H22.6 M13.6 16.5 H22.6" stroke="#303030" stroke-width="1.2"/></svg>
<div class="r" style="left:429px;top:640px;width:597px;height:140px;background:#fff;"></div>
<svg class="s" style="left:437px;top:650px;" width="16" height="16" viewBox="0 0 16 16"><rect x="0" y="0" width="16" height="16" rx="2" fill="#d9d9d9"/><path d="M3.2 5.2 L7.9 9.9 L12.6 5.2" fill="none" stroke="#fff" stroke-width="1.4"/></svg>
<div class="t" style="left:459.2px;top:650px;font-size:14px;line-height:17px;color:#383838;font-weight:400;font-style:normal;font-family:'Liberation Sans', sans-serif;letter-spacing:0.141px;-webkit-text-stroke:0.4px #383838;">Execution Options</div>
<div class="t" style="left:437.0px;top:690px;font-size:12px;line-height:14px;color:#484848;font-weight:400;font-style:normal;font-family:'Liberation Sans', sans-serif;letter-spacing:-0.264px;">Sequence</div>
<div class="t" style="left:553.6px;top:690px;font-size:12px;line-height:14px;color:#555555;font-weight:400;font-style:normal;font-family:'Liberation Sans', sans-serif;letter-spacing:0.752px;">30</div>
<div class="r" style="left:552px;top:707px;width:462px;height:1px;background:#e2e2e2;"></div>
<div class="t" style="left:437.0px;top:722px;font-size:12px;line-height:14px;color:#484848;font-weight:400;font-style:normal;font-family:'Liberation Sans', sans-serif;letter-spacing:0.087px;">Point</div>
<div class="t" style="left:553.6px;top:722px;font-size:12px;line-height:14px;color:#262626;font-weight:400;font-style:normal;font-family:'Liberation Sans', sans-serif;letter-spacing:-0.112px;">Before Header</div>
<div class="r" style="left:552px;top:739px;width:422px;height:1px;background:#e2e2e2;"></div>
<svg class="s" style="left:956.3px;top:724px;" width="11.5" height="7" viewBox="0 0 11.5 7"><path d="M1 1 L5.75 6 L10.5 1" fill="none" stroke="#404040" stroke-width="1.1"/></svg>
<div class="r" style="left:986px;top:716px;width:32px;height:24px;background:#fff;border:1px solid #d6d6d6;border-radius:2px;"></div>
<svg class="s" style="left:986px;top:716px;" width="32" height="24" viewBox="0 0 32 24"><circle cx="9.5" cy="6.5" r="1.5" fill="#303030"/><circle cx="9.5" cy="11.5" r="1.5" fill="#303030"/><circle cx="9.5" cy="16.5" r="1.5" fill="#303030"/><path d="M13.6 6.5 H22.6 M13.6 11.5 H22.6 M13.6 16.5 H22.6" stroke="#303030" stroke-width="1.2"/></svg>
<div class="t" style="left:437.0px;top:754px;font-size:12px;line-height:14px;color:#484848;font-weight:400;font-style:normal;font-family:'Liberation Sans', sans-serif;letter-spacing:-0.4px;">Run Process</div>
<div class="t" style="left:553.6px;top:754px;font-size:12px;line-height:14px;color:#262626;font-weight:400;font-style:normal;font-family:'Liberation Sans', sans-serif;letter-spacing:-0.161px;">Once Per Page Visit (default)</div>
<div class="r" style="left:552px;top:771px;width:462px;height:1px;background:#e2e2e2;"></div>
<svg class="s" style="left:996px;top:756px;" width="11.5" height="7" viewBox="0 0 11.5 7"><path d="M1 1 L5.75 6 L10.5 1" fill="none" stroke="#404040" stroke-width="1.1"/></svg>
<div class="r" style="left:429px;top:795px;width:597px;height:105px;background:#fff;"></div>
<svg class="s" style="left:437px;top:805px;" width="16" height="16" viewBox="0 0 16 16"><rect x="0" y="0" width="16" height="16" rx="2" fill="#d9d9d9"/><path d="M3.2 5.2 L7.9 9.9 L12.6 5.2" fill="none" stroke="#fff" stroke-width="1.4"/></svg>
<div class="t" style="left:459.2px;top:805px;font-size:14px;line-height:17px;color:#383838;font-weight:400;font-style:normal;font-family:'Liberation Sans', sans-serif;letter-spacing:-0.359px;-webkit-text-stroke:0.4px #383838;">Success Message</div>
<div class="t" style="left:437.0px;top:845px;font-size:12px;line-height:14px;color:#484848;font-weight:400;font-style:normal;font-family:'Liberation Sans', sans-serif;letter-spacing:-0.448px;">Success Message</div>
<svg class="s" style="left:993px;top:843px;" width="18" height="17" viewBox="0 0 18 17"><path d="M6 1.5 H15.5 V11 H11.5" fill="none" stroke="#404040" stroke-width="1.1"/><path d="M2 15.5 L9 8.5 M4 8.5 H9 V13.5" fill="none" stroke="#404040" stroke-width="1.1"/></svg>
<div class="r" style="left:437px;top:867px;width:581px;height:40px;background:#fff;border:1px solid #dadada;"></div>
<div class="t" style="left:441.7px;top:874px;font-size:10.1px;line-height:12px;color:#404040;font-weight:400;font-style:normal;font-family:'Liberation Mono', monospace;">CLOB content loaded using Table</div>
<div class="r" style="left:1034px;top:89px;width:8px;height:811px;background:#e0e0e0;border-left:1px solid #d2d2d2;border-right:1px solid #d4d4d4;"></div>
<svg class="s" style="left:1035px;top:490px;" width="6" height="10" viewBox="0 0 6 10"><path d="M1 1 L5 5 L1 9 Z" fill="#3a3a3a"/></svg>
<div class="r" style="left:1042px;top:89px;width:398px;height:36px;background:#f4f4f4;"></div>
<div class="r" style="left:1042px;top:124px;width:264px;height:1px;background:#e0e0e0;"></div>
<div class="r" style="left:1174px;top:89px;width:1px;height:35px;background:#e0e0e0;"></div>
<div class="r" style="left:1306px;top:89px;width:134px;height:811px;background:#fefbea;"></div>
<div class="r" style="left:1042px;top:125px;width:398px;height:775px;background:#fefbea;"></div>
<svg class="s" style="left:1072px;top:97px;" width="18" height="20" viewBox="0 0 18 20"><path d="M3.7 3.5 H13.1 A1.2 1.2 0 0 1 14.3 4.7 V13.2 A1.2 1.2 0 0 1 13.1 14.4 H9.4 L5.3 17.4 V14.4 H3.7 A1.2 1.2 0 0 1 2.5 13.2 V4.7 A1.2 1.2 0 0 1 3.7 3.5 Z" fill="none" stroke="#333" stroke-width="1.2" stroke-linejoin="round"/></svg>
<div class="t" style="left:1092.6px;top:101px;font-size:12px;line-height:14px;color:#404040;font-weight:400;font-style:normal;font-family:'Liberation Sans', sans-serif;letter-spacing:-0.413px;">Messages</div>
<svg class="s" style="left:1197px;top:97px;" width="20" height="20" viewBox="0 0 20 20"><circle cx="8" cy="8.4" r="5.2" fill="none" stroke="#404040" stroke-width="1.1"/><path d="M12.1 12.4 L16.8 17.1" stroke="#404040" stroke-width="1.15"/></svg>
<div class="t" style="left:1219.2px;top:101px;font-size:12px;line-height:14px;color:#404040;font-weight:400;font-style:normal;font-family:'Liberation Sans', sans-serif;letter-spacing:-0.498px;">Page Search</div>
<svg class="s" style="left:1350px;top:98px;" width="18" height="18" viewBox="0 0 18 18"><circle cx="9" cy="9" r="7.4" fill="none" stroke="#404040" stroke-width="1.1"/><text x="9" y="12.8" font-size="10.5" text-anchor="middle" fill="#404040" font-family="Liberation Sans">?</text></svg>
<div class="t" style="left:1372.5px;top:101px;font-size:12px;line-height:14px;color:#404040;font-weight:400;font-style:normal;font-family:'Liberation Sans', sans-serif;letter-spacing:-0.093px;">Help</div>
<div class="t" style="left:1054.5px;top:140px;font-size:14px;line-height:17px;color:#1a1a1a;font-weight:700;font-style:normal;font-family:'Liberation Sans', sans-serif;letter-spacing:-0.331px;">Type</div>
<div class="t" style="left:1054.5px;top:173px;font-size:12px;line-height:14px;color:#585858;font-weight:400;font-style:normal;font-family:'Liberation Sans', sans-serif;letter-spacing:-0.029px;">Available options include:</div>
<div class="t" style="left:1054.5px;top:203px;font-size:12.5px;line-height:15px;color:#3c3c3c;font-weight:400;font-style:normal;font-family:'Liberation Sans', sans-serif;letter-spacing:-0.537px;-webkit-text-stroke:0.45px #3c3c3c;">Clear CLOB</div>
<div class="t" style="left:1078.6px;top:225px;font-size:12px;line-height:14px;color:#585858;font-weight:400;font-style:normal;font-family:'Liberation Sans', sans-serif;letter-spacing:-0.093px;">Clears the plug-in collection state and sets the item’s APEX</div>
<div class="t" style="left:1078.6px;top:245px;font-size:12px;line-height:14px;color:#585858;font-weight:400;font-style:normal;font-family:'Liberation Sans', sans-serif;letter-spacing:-0.11px;">Session State to NULL. It should be used as an equivalent for the</div>
<div class="t" style="left:1078.6px;top:264px;font-size:12px;line-height:14px;color:#585858;font-weight:400;font-style:normal;font-family:'Liberation Sans', sans-serif;letter-spacing:-0.211px;">native Clear process.</div>
<div class="t" style="left:1078.6px;top:297px;font-size:12px;line-height:14px;color:#585858;font-weight:400;font-style:normal;font-family:'Liberation Sans', sans-serif;letter-spacing:-0.135px;">Clear CLOB can be used both on pre-rendering (Before Header,</div>
<div class="t" style="left:1078.6px;top:317px;font-size:12px;line-height:14px;color:#585858;font-weight:400;font-style:normal;font-family:'Liberation Sans', sans-serif;letter-spacing:-0.104px;">After Header, and Before Regions) and after page submission</div>
<div class="t" style="left:1078.6px;top:337px;font-size:12px;line-height:14px;color:#585858;font-weight:400;font-style:normal;font-family:'Liberation Sans', sans-serif;letter-spacing:-0.179px;">(Processing and After Processing).</div>
<div class="t" style="left:1054.5px;top:366px;font-size:12.5px;line-height:15px;color:#3c3c3c;font-weight:400;font-style:normal;font-family:'Liberation Sans', sans-serif;letter-spacing:-0.365px;-webkit-text-stroke:0.45px #3c3c3c;">Load CLOB (SQL Query)</div>
<div class="t" style="left:1078.6px;top:387px;font-size:12px;line-height:14px;color:#585858;font-weight:400;font-style:normal;font-family:'Liberation Sans', sans-serif;letter-spacing:-0.171px;">Loads CLOB value into the plug-in session state based on SQL</div>
<div class="t" style="left:1078.6px;top:403px;font-size:12px;line-height:14px;color:#585858;font-weight:400;font-style:normal;font-family:'Liberation Sans', sans-serif;letter-spacing:-0.132px;">Query returning CLOB value</div>
<div class="t" style="left:1054.5px;top:431px;font-size:12.5px;line-height:15px;color:#3c3c3c;font-weight:400;font-style:normal;font-family:'Liberation Sans', sans-serif;letter-spacing:-0.069px;-webkit-text-stroke:0.45px #3c3c3c;">Load CLOB (Function Body returning CLOB)</div>
<div class="t" style="left:1078.6px;top:451px;font-size:12px;line-height:14px;color:#585858;font-weight:400;font-style:normal;font-family:'Liberation Sans', sans-serif;letter-spacing:-0.173px;">Loads CLOB value into the plug-in session state based on PL/SQL</div>
<div class="t" style="left:1078.6px;top:467px;font-size:12px;line-height:14px;color:#585858;font-weight:400;font-style:normal;font-family:'Liberation Sans', sans-serif;letter-spacing:-0.123px;">Function Body returning CLOB</div>
<div class="t" style="left:1054.5px;top:495px;font-size:12.5px;line-height:15px;color:#3c3c3c;font-weight:400;font-style:normal;font-family:'Liberation Sans', sans-serif;letter-spacing:-0.328px;-webkit-text-stroke:0.45px #3c3c3c;">Load CLOB (Table)</div>
<div class="t" style="left:1078.6px;top:515px;font-size:12px;line-height:14px;color:#585858;font-weight:400;font-style:normal;font-family:'Liberation Sans', sans-serif;letter-spacing:-0.108px;">Loads CLOB value into the plug-in session state based on the</div>
<div class="t" style="left:1078.6px;top:530px;font-size:12px;line-height:14px;color:#585858;font-weight:400;font-style:normal;font-family:'Liberation Sans', sans-serif;letter-spacing:0.022px;">given table specification.</div>
<div class="t" style="left:1054.5px;top:559px;font-size:12.5px;line-height:15px;color:#3c3c3c;font-weight:400;font-style:normal;font-family:'Liberation Sans', sans-serif;letter-spacing:-0.275px;-webkit-text-stroke:0.45px #3c3c3c;">Update CLOB (PL/SQL Code)</div>
<div class="t" style="left:1078.6px;top:581px;font-size:12px;line-height:14px;color:#585858;font-weight:400;font-style:normal;font-family:'Liberation Sans', sans-serif;letter-spacing:-0.245px;">Updates CLOB value in the database based on PL/SQL Code. The</div>
<div class="t" style="left:1078.6px;top:601px;font-size:12px;line-height:14px;color:#585858;font-weight:400;font-style:normal;font-family:'Liberation Sans', sans-serif;letter-spacing:-0.244px;">PL/SQL Code has to implement the UPDATE statement.</div>
<div class="t" style="left:1078.6px;top:634px;font-size:12px;line-height:14px;color:#585858;font-weight:400;font-style:normal;font-family:'Liberation Sans', sans-serif;letter-spacing:-0.192px;">Uses <span style="color:#333;-webkit-text-stroke:0.45px #333">:CONTENT</span> bind variable to reference a current CLOB value.</div>
<div class="t" style="left:1054.5px;top:664px;font-size:12.5px;line-height:15px;color:#3c3c3c;font-weight:400;font-style:normal;font-family:'Liberation Sans', sans-serif;letter-spacing:-0.241px;-webkit-text-stroke:0.45px #3c3c3c;">Update CLOB (Table)</div>
<div class="t" style="left:1078.6px;top:686px;font-size:12px;line-height:14px;color:#585858;font-weight:400;font-style:normal;font-family:'Liberation Sans', sans-serif;letter-spacing:-0.111px;">Updates CLOB value in the database based on the given table</div>
<div class="t" style="left:1078.6px;top:706px;font-size:12px;line-height:14px;color:#585858;font-weight:400;font-style:normal;font-family:'Liberation Sans', sans-serif;letter-spacing:0.01px;">specification.</div>
<div class="t" style="left:1054.5px;top:736px;font-size:12.5px;line-height:15px;color:#3c3c3c;font-weight:400;font-style:normal;font-family:'Liberation Sans', sans-serif;letter-spacing:-0.041px;-webkit-text-stroke:0.45px #3c3c3c;">Delete Removed Images</div>
<div class="t" style="left:1078.6px;top:756px;font-size:12px;line-height:14px;color:#585858;font-weight:400;font-style:normal;font-family:'Liberation Sans', sans-serif;letter-spacing:-0.107px;">Given PL/SQL code is executed in the loop over images removed</div>
<div class="t" style="left:1078.6px;top:771px;font-size:12px;line-height:14px;color:#585858;font-weight:400;font-style:normal;font-family:'Liberation Sans', sans-serif;letter-spacing:0.056px;">from the editor. Learn more about example implementation in</div>
<div class="t" style="left:1078.6px;top:787px;font-size:12px;line-height:14px;color:#585858;font-weight:400;font-style:normal;font-family:'Liberation Sans', sans-serif;letter-spacing:0.057px;">help text for attribute <span style="color:#333;-webkit-text-stroke:0.45px #333">PL/SQL Code</span>.</div>
</body></html>
